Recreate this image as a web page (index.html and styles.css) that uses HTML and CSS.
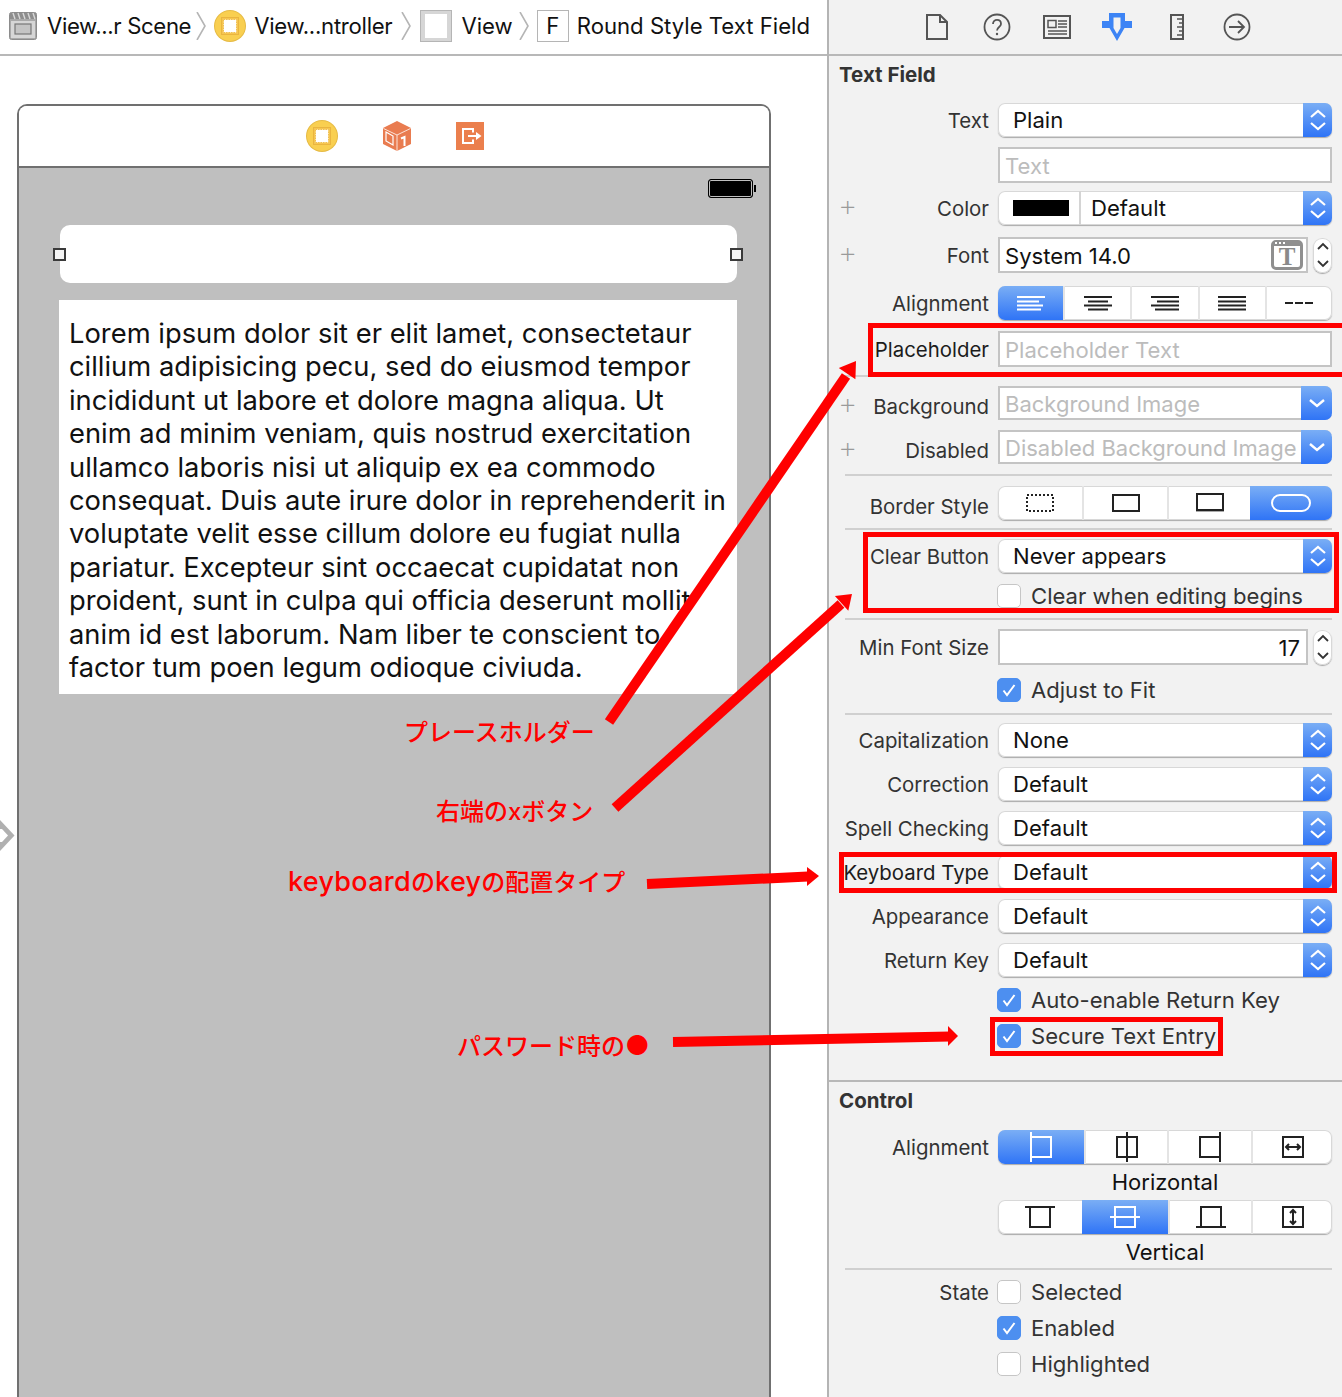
FILE: index.html
```html
<!DOCTYPE html>
<html lang="en">
<head>
	<meta charset="UTF-8"/>
	<title>Round Style Text Field</title>
	<link rel="stylesheet" href="styles.css">
</head>
<body>

<svg class="defs" width="0" height="0">
	<symbol id="updown" viewBox="0 0 20 24"><path d="M3 9l7-6 7 6M3 15l7 6 7-6" fill="none" stroke="currentColor" stroke-width="2.2"/></symbol>
	<symbol id="down" viewBox="0 0 20 24"><path d="M3 9l7 6 7-6" fill="none" stroke="currentColor" stroke-width="2.4"/></symbol>
	<symbol id="vc" viewBox="0 0 32 32">
		<circle cx="16" cy="16" r="16" fill="#e6bb45"/>
		<circle cx="16" cy="16" r="15" fill="#f9cf50"/>
		<rect x="7.500" y="7.500" width="17" height="17" fill="#f6c650" stroke="#eab540"/>
		<rect x="9.500" y="9.500" width="13" height="13" fill="#fff" stroke="#f0bf50" stroke-dasharray="1.500 1"/>
	</symbol>
</svg>

<div class="page">

<!-- storyboard side -->
<div class="canvas">
	<div class="crumbs">
		<svg class="crumb-icon scene-icon" width="28" height="28" viewBox="0 0 28 28">
			<rect x="0.5" y="0.5" width="27" height="27" rx="2" fill="#a9a9a9" stroke="#8c8c8c"/>
			<path d="M1 1h26v6H1z" fill="#8e8e8e"/>
			<path d="M4 1l2 6M9 1l2 6M14 1l2 6M19 1l2 6M24 1l2 6" stroke="#d8d8d8" stroke-width="1.4"/>
			<rect x="2" y="9" width="24" height="17" fill="#d6d6d6"/>
			<rect x="6" y="12" width="16" height="10" fill="#c4c4c4" stroke="#777" stroke-width="1.2"/>
		</svg>
		<span class="crumb-text crumb-first">View...r Scene</span>
		<svg class="chev chev-first" width="10" height="28" viewBox="0 0 10 28"><path d="M1 0l8 14-8 14" fill="none" stroke="#b5b5b5" stroke-width="1.6"/></svg>
		<svg class="crumb-icon yellow" width="32" height="32"><use href="#vc"/></svg>
		<span class="crumb-text crumb-tight">View...ntroller</span>
		<svg class="chev chev-mid" width="10" height="28" viewBox="0 0 10 28"><path d="M1 0l8 14-8 14" fill="none" stroke="#b5b5b5" stroke-width="1.6"/></svg>
		<span class="box-view"><span></span></span>
		<span class="crumb-text">View</span>
		<svg class="chev chev-last" width="10" height="28" viewBox="0 0 10 28"><path d="M1 0l8 14-8 14" fill="none" stroke="#b5b5b5" stroke-width="1.6"/></svg>
		<span class="box-f">F</span>
		<span class="crumb-text crumb-end">Round Style Text Field</span>
	</div>

	<svg class="entry-arrow" width="15" height="32" viewBox="0 0 15 32">
		<polygon points="0,0 14.500,15.500 0,31" fill="#b0b0b0"/>
		<polygon points="0,9 2,9 8,15.500 2,22 0,22" fill="#fff"/>
	</svg>

	<div class="frame">
		<div class="frame-bar">
			<svg width="32" height="32"><use href="#vc"/></svg>
			<svg class="cube" width="30" height="30" viewBox="0 0 30 30">
				<path d="M1 7L15 0l14 7v16l-14 7-14-7z" fill="#e97c50"/>
				<path d="M1.500 7.500L15 14l13.500-6.500M15 14v16" fill="none" stroke="#fbe3d8" stroke-width="1"/>
				<path d="M4 11l7 4v9l-7-4z" fill="none" stroke="#fff" stroke-width="1.200"/>
				<path d="M19 17.500l3.500-1.500v9" fill="none" stroke="#fff" stroke-width="2"/>
			</svg>
			<svg class="exit" width="28" height="28" viewBox="0 0 28 28">
				<rect width="28" height="28" fill="#eb7f4d"/>
				<path d="M17 10.500V7H7v14h10v-3.500" fill="none" stroke="#fff" stroke-width="2"/>
				<path d="M12 14h10" stroke="#fff" stroke-width="2"/>
				<polygon points="20,10 25.500,14 20,18" fill="#fff"/>
			</svg>
		</div>
		<div class="screen">
			<div class="status">
				<div class="battery"></div>
			</div>
			<div class="field">
				<span class="handle handle-l"></span>
				<span class="handle handle-r"></span>
			</div>
			<div class="textview">Lorem ipsum dolor sit er elit lamet, consectetaur<br>cillium adipisicing pecu, sed do eiusmod tempor<br>incididunt ut labore et dolore magna aliqua. Ut<br>enim ad minim veniam, quis nostrud exercitation<br>ullamco laboris nisi ut aliquip ex ea commodo<br>consequat. Duis aute irure dolor in reprehenderit in<br>voluptate velit esse cillum dolore eu fugiat nulla<br>pariatur. Excepteur sint occaecat cupidatat non<br>proident, sunt in culpa qui officia deserunt mollit<br>anim id est laborum. Nam liber te conscient to<br>factor tum poen legum odioque civiuda.</div>
		</div>
	</div>
</div>

<!-- inspector side -->
<div class="inspector">
	<div class="tabs">
		<span class="tab"><svg width="24" height="28" viewBox="0 0 24 28"><path d="M2 2h13l7 7v17H2zM15 2v7h7" fill="none" stroke="#555" stroke-width="2"/></svg></span>
		<span class="tab"><svg width="28" height="28" viewBox="0 0 28 28"><circle cx="14" cy="14" r="12.500" fill="none" stroke="#555" stroke-width="1.800"/><path d="M10 11c0-5.500 8-5.500 8 0 0 3-4 3-4 6.500" fill="none" stroke="#555" stroke-width="1.800"/><circle cx="14" cy="21" r="1.200" fill="#555"/></svg></span>
		<span class="tab"><svg width="28" height="24" viewBox="0 0 28 24"><rect x="1" y="1" width="26" height="22" fill="none" stroke="#555" stroke-width="2"/><path d="M5 5.500h8v7H5z" fill="none" stroke="#555" stroke-width="1.500"/><path d="M15 6h9M15 9h9M15 12h9M5 16h19M5 19h19" stroke="#555" stroke-width="1.500"/></svg></span>
		<span class="tab"><svg width="30" height="30" viewBox="0 0 30 30"><path d="M7 1h16v8h7v7h-7.500L15 29 7.500 16H0V9h7z" fill="#3d84f5"/><path d="M11.500 5.500h7v10.500L15 22l-3.500-6z" fill="#f2f2f2"/></svg></span>
		<span class="tab"><svg width="14" height="26" viewBox="0 0 14 26"><rect x="1" y="1" width="12" height="24" fill="none" stroke="#555" stroke-width="2"/><path d="M7 5h5M9 9h3M7 13h5M9 17h3M7 21h5" stroke="#555" stroke-width="1.600"/></svg></span>
		<span class="tab"><svg width="28" height="28" viewBox="0 0 28 28"><circle cx="14" cy="14" r="12.500" fill="none" stroke="#555" stroke-width="1.800"/><path d="M6 14h15M15 8l6 6-6 6" fill="none" stroke="#555" stroke-width="1.800"/></svg></span>
	</div>

	<div class="heading heading-first">Text Field</div>

	<div class="row row-first">
		<label class="lab">Text</label>
		<div class="select"><span class="value">Plain</span><span class="arrows"><svg width="20" height="24"><use href="#updown"/></svg></span></div>
	</div>
	<div class="row row-input">
		<label class="lab"></label>
		<div class="input hint">Text</div>
	</div>
	<div class="row row-8">
		<label class="lab"><span class="plus">+</span>Color</label>
		<div class="select"><span class="swatch-cell"><span class="swatch"></span></span><span class="value value-color">Default</span><span class="arrows"><svg width="20" height="24"><use href="#updown"/></svg></span></div>
	</div>
	<div class="row row-12 row-input">
		<label class="lab"><span class="plus">+</span>Font</label>
		<div class="input-step">
			<div class="input dark">System 14.0<span class="t-btn">T</span></div>
			<span class="stepper"><svg width="14" height="28" viewBox="0 0 14 28"><path d="M2 8l5-5 5 5M2 20l5 5 5-5" fill="none" stroke="#333" stroke-width="1.800"/></svg></span>
		</div>
	</div>
	<div class="row row-13">
		<label class="lab">Alignment</label>
		<div class="seg">
			<span class="cell on"><svg width="28" height="15" viewBox="0 0 28 15"><path d="M0 1h28M0 5.500h22M0 9.500h26M0 13.500h24" stroke="#fff" stroke-width="1.800"/></svg></span>
			<span class="cell"><svg width="28" height="15" viewBox="0 0 28 15"><path d="M0 1h28M4 5.500h20M0 9.500h28M4 13.500h20" stroke="#222" stroke-width="1.800"/></svg></span>
			<span class="cell"><svg width="28" height="15" viewBox="0 0 28 15"><path d="M0 1h28M6 5.500h22M0 9.500h28M4 13.500h24" stroke="#222" stroke-width="1.800"/></svg></span>
			<span class="cell"><svg width="28" height="15" viewBox="0 0 28 15"><path d="M0 1h28M0 5.500h28M0 9.500h28M0 13.500h28" stroke="#222" stroke-width="1.800"/></svg></span>
			<span class="cell"><svg width="28" height="4" viewBox="0 0 28 4"><path d="M0 2h8M10 2h8M20 2h8" stroke="#222" stroke-width="1.800"/></svg></span>
		</div>
	</div>
	<div class="row row-11 row-input">
		<label class="lab lab-dark">Placeholder</label>
		<div class="input hint">Placeholder Text</div>
	</div>
	<div class="sep sep-8"></div>

	<div class="row row-9">
		<label class="lab lab-low"><span class="plus">+</span>Background</label>
		<div class="combo"><span class="combo-text">Background Image</span><span class="drop"><svg width="20" height="24"><use href="#down"/></svg></span></div>
	</div>
	<div class="row">
		<label class="lab lab-low"><span class="plus">+</span>Disabled</label>
		<div class="combo"><span class="combo-text">Disabled Background Image</span><span class="drop"><svg width="20" height="24"><use href="#down"/></svg></span></div>
	</div>
	<div class="sep"></div>
	<div class="row">
		<label class="lab lab-low">Border Style</label>
		<div class="seg seg-border">
			<span class="cell"><svg width="28" height="18" viewBox="0 0 28 18"><rect x="1" y="1" width="26" height="16" fill="none" stroke="#222" stroke-width="2" stroke-dasharray="2 2"/></svg></span>
			<span class="cell"><svg width="28" height="18" viewBox="0 0 28 18"><rect x="1" y="1" width="26" height="16" fill="none" stroke="#222" stroke-width="2"/></svg></span>
			<span class="cell"><svg width="28" height="20" viewBox="0 0 28 20"><rect x="1" y="1" width="26" height="16" fill="none" stroke="#222" stroke-width="2"/><path d="M0 18.500h28" stroke="#aaa"/></svg></span>
			<span class="cell on"><svg width="40" height="18" viewBox="0 0 40 18"><rect x="1" y="1" width="38" height="16" rx="8" fill="none" stroke="#fff" stroke-width="2"/></svg></span>
		</div>
	</div>
	<div class="sep sep-8"></div>
	<div class="row row-9">
		<label class="lab">Clear Button</label>
		<div class="select"><span class="value">Never appears</span><span class="arrows"><svg width="20" height="24"><use href="#updown"/></svg></span></div>
	</div>
	<div class="row row-check row-11">
		<label class="lab"></label>
		<span class="check"></span><span class="check-text">Clear when editing begins</span>
	</div>
	<div class="sep"></div>

	<div class="row row-9 row-input">
		<label class="lab">Min Font Size</label>
		<div class="input-step">
			<div class="input dark num">17</div>
			<span class="stepper"><svg width="14" height="28" viewBox="0 0 14 28"><path d="M2 8l5-5 5 5M2 20l5 5 5-5" fill="none" stroke="#333" stroke-width="1.800"/></svg></span>
		</div>
	</div>
	<div class="row row-check row-13">
		<label class="lab"></label>
		<span class="check on"><svg width="16" height="16" viewBox="0 0 16 16"><path d="M2.500 8.500l3.500 4.500 7.500-10" fill="none" stroke="#fff" stroke-width="2"/></svg></span><span class="check-text">Adjust to Fit</span>
	</div>
	<div class="sep sep-11"></div>

	<div class="row row-8">
		<label class="lab">Capitalization</label>
		<div class="select"><span class="value">None</span><span class="arrows"><svg width="20" height="24"><use href="#updown"/></svg></span></div>
	</div>
	<div class="row">
		<label class="lab">Correction</label>
		<div class="select"><span class="value">Default</span><span class="arrows"><svg width="20" height="24"><use href="#updown"/></svg></span></div>
	</div>
	<div class="row">
		<label class="lab">Spell Checking</label>
		<div class="select"><span class="value">Default</span><span class="arrows"><svg width="20" height="24"><use href="#updown"/></svg></span></div>
	</div>
	<div class="row">
		<label class="lab lab-dark">Keyboard Type</label>
		<div class="select"><span class="value">Default</span><span class="arrows"><svg width="20" height="24"><use href="#updown"/></svg></span></div>
	</div>
	<div class="row">
		<label class="lab">Appearance</label>
		<div class="select"><span class="value">Default</span><span class="arrows"><svg width="20" height="24"><use href="#updown"/></svg></span></div>
	</div>
	<div class="row">
		<label class="lab">Return Key</label>
		<div class="select"><span class="value">Default</span><span class="arrows"><svg width="20" height="24"><use href="#updown"/></svg></span></div>
	</div>
	<div class="row row-check row-11">
		<label class="lab"></label>
		<span class="check on"><svg width="16" height="16" viewBox="0 0 16 16"><path d="M2.500 8.500l3.500 4.500 7.500-10" fill="none" stroke="#fff" stroke-width="2"/></svg></span><span class="check-text">Auto-enable Return Key</span>
	</div>
	<div class="row row-check row-12">
		<label class="lab"></label>
		<span class="check on"><svg width="16" height="16" viewBox="0 0 16 16"><path d="M2.500 8.500l3.500 4.500 7.500-10" fill="none" stroke="#fff" stroke-width="2"/></svg></span><span class="check-text">Secure Text Entry</span>
	</div>

	<div class="section-line"></div>
	<div class="heading">Control</div>

	<div class="row row-control">
		<label class="lab">Alignment</label>
		<div class="seg seg-horiz">
			<span class="cell on"><svg width="30" height="30" viewBox="0 0 30 30"><path d="M5 5h20v20H5zM5 0v30" fill="none" stroke="#fff" stroke-width="2"/></svg></span>
			<span class="cell"><svg width="30" height="30" viewBox="0 0 30 30"><path d="M5 5h20v20H5zM15 0v30" fill="none" stroke="#222" stroke-width="2"/></svg></span>
			<span class="cell"><svg width="30" height="30" viewBox="0 0 30 30"><path d="M5 5h20v20H5zM25 0v30" fill="none" stroke="#222" stroke-width="2"/></svg></span>
			<span class="cell"><svg width="30" height="30" viewBox="0 0 30 30"><path d="M5 5h20v20H5zM8 15h14M11 12l-3 3 3 3M19 12l3 3-3 3" fill="none" stroke="#222" stroke-width="2"/></svg></span>
		</div>
	</div>
	<div class="caption">Horizontal</div>
	<div class="row row-caption">
		<label class="lab"></label>
		<div class="seg seg-vert">
			<span class="cell"><svg width="30" height="30" viewBox="0 0 30 30"><path d="M5 5h20v20H5zM0 5h30" fill="none" stroke="#222" stroke-width="2"/></svg></span>
			<span class="cell on"><svg width="30" height="30" viewBox="0 0 30 30"><path d="M5 5h20v20H5zM0 15h30" fill="none" stroke="#fff" stroke-width="2"/></svg></span>
			<span class="cell"><svg width="30" height="30" viewBox="0 0 30 30"><path d="M5 5h20v20H5zM0 25h30" fill="none" stroke="#222" stroke-width="2"/></svg></span>
			<span class="cell"><svg width="30" height="30" viewBox="0 0 30 30"><path d="M5 5h20v20H5zM15 8v14M12 11l3-3 3 3M12 19l3 3 3-3" fill="none" stroke="#222" stroke-width="2"/></svg></span>
		</div>
	</div>
	<div class="caption">Vertical</div>
	<div class="sep sep-state"></div>

	<div class="row row-check row-state">
		<label class="lab">State</label>
		<span class="check"></span><span class="check-text">Selected</span>
	</div>
	<div class="row row-check row-12">
		<label class="lab"></label>
		<span class="check on"><svg width="16" height="16" viewBox="0 0 16 16"><path d="M2.500 8.500l3.500 4.500 7.500-10" fill="none" stroke="#fff" stroke-width="2"/></svg></span><span class="check-text">Enabled</span>
	</div>
	<div class="row row-check row-12">
		<label class="lab"></label>
		<span class="check"></span><span class="check-text">Highlighted</span>
	</div>
</div>

</div>

<!-- red notes drawn over the screenshot -->
<svg class="marks" width="1342" height="1397" viewBox="0 0 1342 1397">
	<g fill="none" stroke="#f00" stroke-width="5">
		<rect x="870.500" y="325.500" width="475" height="49"/>
		<rect x="865.500" y="534.500" width="471" height="76"/>
		<rect x="841.500" y="854.500" width="493" height="36"/>
		<rect x="992.500" y="1019.500" width="228" height="34"/>
	</g>
	<g stroke="#f00" stroke-width="10">
		<path d="M609 722L846 376"/>
		<path d="M615 808L841 604"/>
		<path d="M647 884L808 876.500"/>
		<path d="M673 1042L950 1036.500"/>
	</g>
	<g fill="#f00">
		<polygon points="856,361 855.400,379.300 838.800,367.900"/>
		<polygon points="852,594 848.300,610.800 834.900,596"/>
		<polygon points="819,876 807,867 807,886"/>
		<polygon points="958,1036 948,1026 948,1046"/>
	</g>
</svg>
<div class="note note-1">プレースホルダー</div>
<div class="note note-2">右端のxボタン</div>
<div class="note note-3"><span class="note-latin">keyboard</span>の<span class="note-latin">key</span>の配置タイプ</div>
<div class="note note-4">パスワード時の<span class="note-dot">●</span></div>

</body>
</html>
```

FILE: styles.css
```css
html {
	font-family: Inter, "Noto Sans CJK JP", sans-serif;
}
body {
	margin: 0;
	padding: 0;
	position: relative;
	width: 1342px;
	height: 1397px;
	overflow: hidden;
	background: #fff;
}
.defs {
	position: absolute;
}
.page {
	display: flex;
	height: 1397px;
}

/* storyboard side */
.canvas {
	position: relative;
	width: 827px;
	flex: none;
	border-right: 2px solid #b4b4b4;
	overflow: hidden;
}
.crumbs {
	display: flex;
	align-items: center;
	height: 52px;
	padding: 0 0 2px 9px;
	border-bottom: 2px solid #b8b8b8;
	font-size: 22.15px;
	color: #111;
	white-space: nowrap;
}
.crumb-icon, .box-view, .box-f {
	flex: none;
}
.crumb-text {
	margin-left: 9px;
}
.crumb-first {
	margin-left: 10px;
	letter-spacing: -0.35px;
}
.crumb-tight {
	margin-left: 8px;
	letter-spacing: -0.27px;
}
.crumb-end {
	margin-left: 8px;
}
.chev {
	flex: none;
	margin-left: 8px;
	margin-right: 8px;
}
.chev-first {
	margin-left: 5px;
}
.chev-mid {
	margin-left: 9px;
	margin-right: 9px;
}
.chev-last {
	margin-left: 6px;
}
.box-view {
	display: flex;
	align-items: center;
	justify-content: center;
	box-sizing: border-box;
	width: 32px;
	height: 32px;
	background: #d6d6d6;
	border: 1px solid #b5b5b5;
}
.box-view span {
	width: 22px;
	height: 24px;
	background: #fff;
}
.box-f {
	box-sizing: border-box;
	width: 32px;
	height: 32px;
	line-height: 30px;
	text-align: center;
	border: 1px solid #b5b5b5;
}
.entry-arrow {
	position: absolute;
	left: 0;
	top: 820px;
}
.frame {
	box-sizing: border-box;
	width: 754px;
	height: 1400px;
	margin: 48px 0 0 17px;
	border: 2px solid #707070;
	border-bottom: 0;
	border-radius: 10px 10px 0 0;
	overflow: hidden;
}
.frame-bar {
	display: flex;
	align-items: center;
	justify-content: center;
	gap: 44px;
	height: 60px;
	padding-left: 2px;
	border-bottom: 2px solid #707070;
	background: #fff;
}
.screen {
	height: 100%;
	background: #bfbfbf;
}
.status {
	display: flex;
	justify-content: flex-end;
	padding: 11px 16px 0 0;
}
.battery {
	position: relative;
	box-sizing: border-box;
	width: 45px;
	height: 19px;
	background: #000;
	border: 1px solid #000;
	border-radius: 3px;
	box-shadow: inset 0 0 0 1px #bfbfbf;
}
.battery::after {
	content: "";
	position: absolute;
	right: -4px;
	top: 5px;
	width: 2px;
	height: 7px;
	background: #000;
}
.field {
	position: relative;
	width: 677px;
	height: 58px;
	margin: 27px 0 0 41px;
	background: #fff;
	border-radius: 10px;
}
.handle {
	position: absolute;
	top: 23px;
	box-sizing: border-box;
	width: 13px;
	height: 13px;
	background: #f4f4f4;
	border: 2px solid #3a3a3a;
}
.handle-l { left: -7px; }
.handle-r { right: -6px; }
.textview {
	width: 668px;
	height: 377px;
	margin: 17px 0 0 40px;
	padding-left: 10px;
	padding-top: 17px;
	background: #fff;
	font-size: 27.35px;
	line-height: 33.4px;
	color: #111;
	white-space: nowrap;
}

/* inspector side */
.inspector {
	flex: none;
	box-sizing: border-box;
	width: 513px;
	padding: 0 10px 0 11px;
	background: #f2f2f2;
	color: #333;
}
.tabs {
	display: flex;
	justify-content: center;
	align-items: center;
	height: 54px;
	margin: 0 -10px 0 -11px;
	padding-left: 2px;
	border-bottom: 2px solid #b8b8b8;
}
.tab {
	display: flex;
	justify-content: center;
	width: 60px;
}
.heading {
	font-size: 20.5px;
	font-weight: 700;
	line-height: 26px;
	margin-top: 6px;
	margin-left: -1px;
}
.row {
	display: flex;
	align-items: center;
	gap: 9px;
	height: 34px;
	margin-top: 10px;
}
.row-first { margin-top: 15px; }
.row-8 { margin-top: 8px; }
.row-9 { margin-top: 9px; }
.row-11 { margin-top: 11px; }
.row-12 { margin-top: 12px; }
.row-13 { margin-top: 13px; }
.row-input { height: 36px; }
.row-check { height: 24px; }
.row-control { margin-top: 16px; }
.row-caption { margin-top: 5px; }
.row-state { margin-top: 10px; }
.lab {
	display: flex;
	justify-content: flex-end;
	position: relative;
	flex: none;
	width: 149px;
	padding-top: 1px;
	font-size: 20.4px;
	color: #333;
	white-space: nowrap;
}
.lab-dark {
	color: #1c1c1c;
}
.lab-low {
	padding-top: 6px;
}
.plus {
	position: absolute;
	left: -2px;
	top: -8px;
	font-size: 30px;
	font-weight: 200;
	color: #9a9a9a;
}
.lab-low .plus {
	top: -3px;
}
.select, .seg {
	flex: 1;
	display: flex;
	align-items: center;
	box-sizing: border-box;
	height: 34px;
	background: #fff;
	border-radius: 7px;
	box-shadow: inset 0 0 0 1px #d8d8d8, 0 1px 1px #aaa;
	overflow: hidden;
}
.select {
	font-size: 22.1px;
	color: #111;
}
.value {
	flex: 1;
	padding-left: 15px;
}
.swatch-cell {
	display: flex;
	align-items: center;
	justify-content: center;
	box-sizing: border-box;
	width: 83px;
	height: 100%;
	padding-left: 4px;
	border-right: 2px solid #d4d4d4;
}
.swatch {
	flex: none;
	width: 56px;
	height: 16px;
	background: #000;
}
.value-color {
	padding-left: 10px;
}
.arrows, .drop {
	display: flex;
	align-items: center;
	justify-content: center;
	flex: none;
	width: 29px;
	height: 100%;
	color: #fff;
	background: linear-gradient(#7aaef5, #2f74f6);
}
.input {
	flex: 1;
	display: flex;
	align-items: center;
	position: relative;
	box-sizing: border-box;
	height: 36px;
	padding: 2px 0 0 5px;
	background: #fff;
	border: 2px solid #c4c4c4;
	font-size: 22.1px;
	white-space: nowrap;
}
.hint {
	color: #bcbcbc;
}
.dark {
	color: #111;
}
.num {
	justify-content: flex-end;
	padding-right: 6px;
}
.input-step {
	flex: 1;
	display: flex;
	align-items: center;
	gap: 5px;
}
.stepper {
	display: flex;
	align-items: center;
	justify-content: center;
	flex: none;
	width: 19px;
	height: 35px;
	background: #fff;
	border-radius: 9px;
	box-shadow: inset 0 0 0 1px #d8d8d8, 0 1px 1px #aaa;
}
.t-btn {
	position: absolute;
	right: 3px;
	top: 1px;
	box-sizing: border-box;
	width: 32px;
	height: 30px;
	text-align: center;
	font-family: "Liberation Serif", serif;
	font-weight: 700;
	font-size: 25px;
	line-height: 22px;
	color: #8a8a8a;
	background: #fff;
	border: 3px solid #8f8f8f;
	border-top-width: 6px;
	border-radius: 5px;
}
.t-btn::before {
	content: "";
	position: absolute;
	left: 1px;
	top: -4px;
	width: 10px;
	border-top: 2px dotted #fff;
}
.seg-border, .seg-horiz, .seg-vert {
	display: grid;
}
.seg-border { grid-template-columns: 84px 85px 83px 1fr; }
.seg-horiz { grid-template-columns: 86px 83px 84px 1fr; }
.seg-vert { grid-template-columns: 84px 86px 83px 1fr; }
.cell {
	flex: 1;
	display: flex;
	align-items: center;
	justify-content: center;
	height: 100%;
	border-left: 2px solid #e4e4e4;
}
.cell:first-child {
	border-left: 0;
}
.cell.on {
	border-left: 0;
	background: linear-gradient(#7aaef5, #2f74f6);
}
.combo {
	flex: 1;
	min-width: 0;
	display: flex;
	box-sizing: border-box;
	height: 34px;
	background: #fff;
	border: 2px solid #c4c4c4;
	border-right: 0;
	border-radius: 0 7px 7px 0;
	font-size: 22px;
	color: #bcbcbc;
	white-space: nowrap;
}
.combo-text {
	flex: 1;
	min-width: 0;
	padding: 1px 0 0 5px;
	line-height: 31px;
	overflow: hidden;
}
.drop {
	width: 31px;
	height: 34px;
	margin-top: -2px;
	border-radius: 0 7px 7px 0;
}
.sep {
	height: 2px;
	margin: 10px 0 0 5px;
	background: #d0d0d0;
}
.sep-8 { margin-top: 8px; }
.sep-11 { margin-top: 11px; }
.sep-state { margin-top: 3px; }
.check {
	display: flex;
	align-items: center;
	justify-content: center;
	flex: none;
	box-sizing: border-box;
	width: 24px;
	height: 24px;
	margin: 0 1px 0 -1px;
	background: #fff;
	border: 1px solid #c6c6c6;
	border-radius: 5px;
}
.check.on {
	background: #4d8ff0;
	border-color: #4d8ff0;
}
.check-text {
	font-size: 22.1px;
	color: #333;
	white-space: nowrap;
}
.section-line {
	height: 2px;
	margin: 32px -10px 0 -11px;
	background: #b8b8b8;
}
.caption {
	margin-left: 158px;
	margin-top: 5px;
	height: 26px;
	line-height: 26px;
	text-align: center;
	font-size: 22px;
	color: #111;
}

/* annotations */
.marks {
	position: absolute;
	left: 0;
	top: 0;
	pointer-events: none;
}
.note {
	position: absolute;
	font-size: 24px;
	font-weight: 500;
	line-height: 32px;
	color: #f00;
	white-space: nowrap;
}
.note-latin {
	font-size: 27px;
	letter-spacing: 0.3px;
}
.note-dot {
	font-size: 27px;
}
.note-1 { left: 404px; top: 717px; }
.note-2 { left: 436px; top: 796px; }
.note-3 { left: 288px; top: 866px; }
.note-4 { left: 457px; top: 1030px; }
```
